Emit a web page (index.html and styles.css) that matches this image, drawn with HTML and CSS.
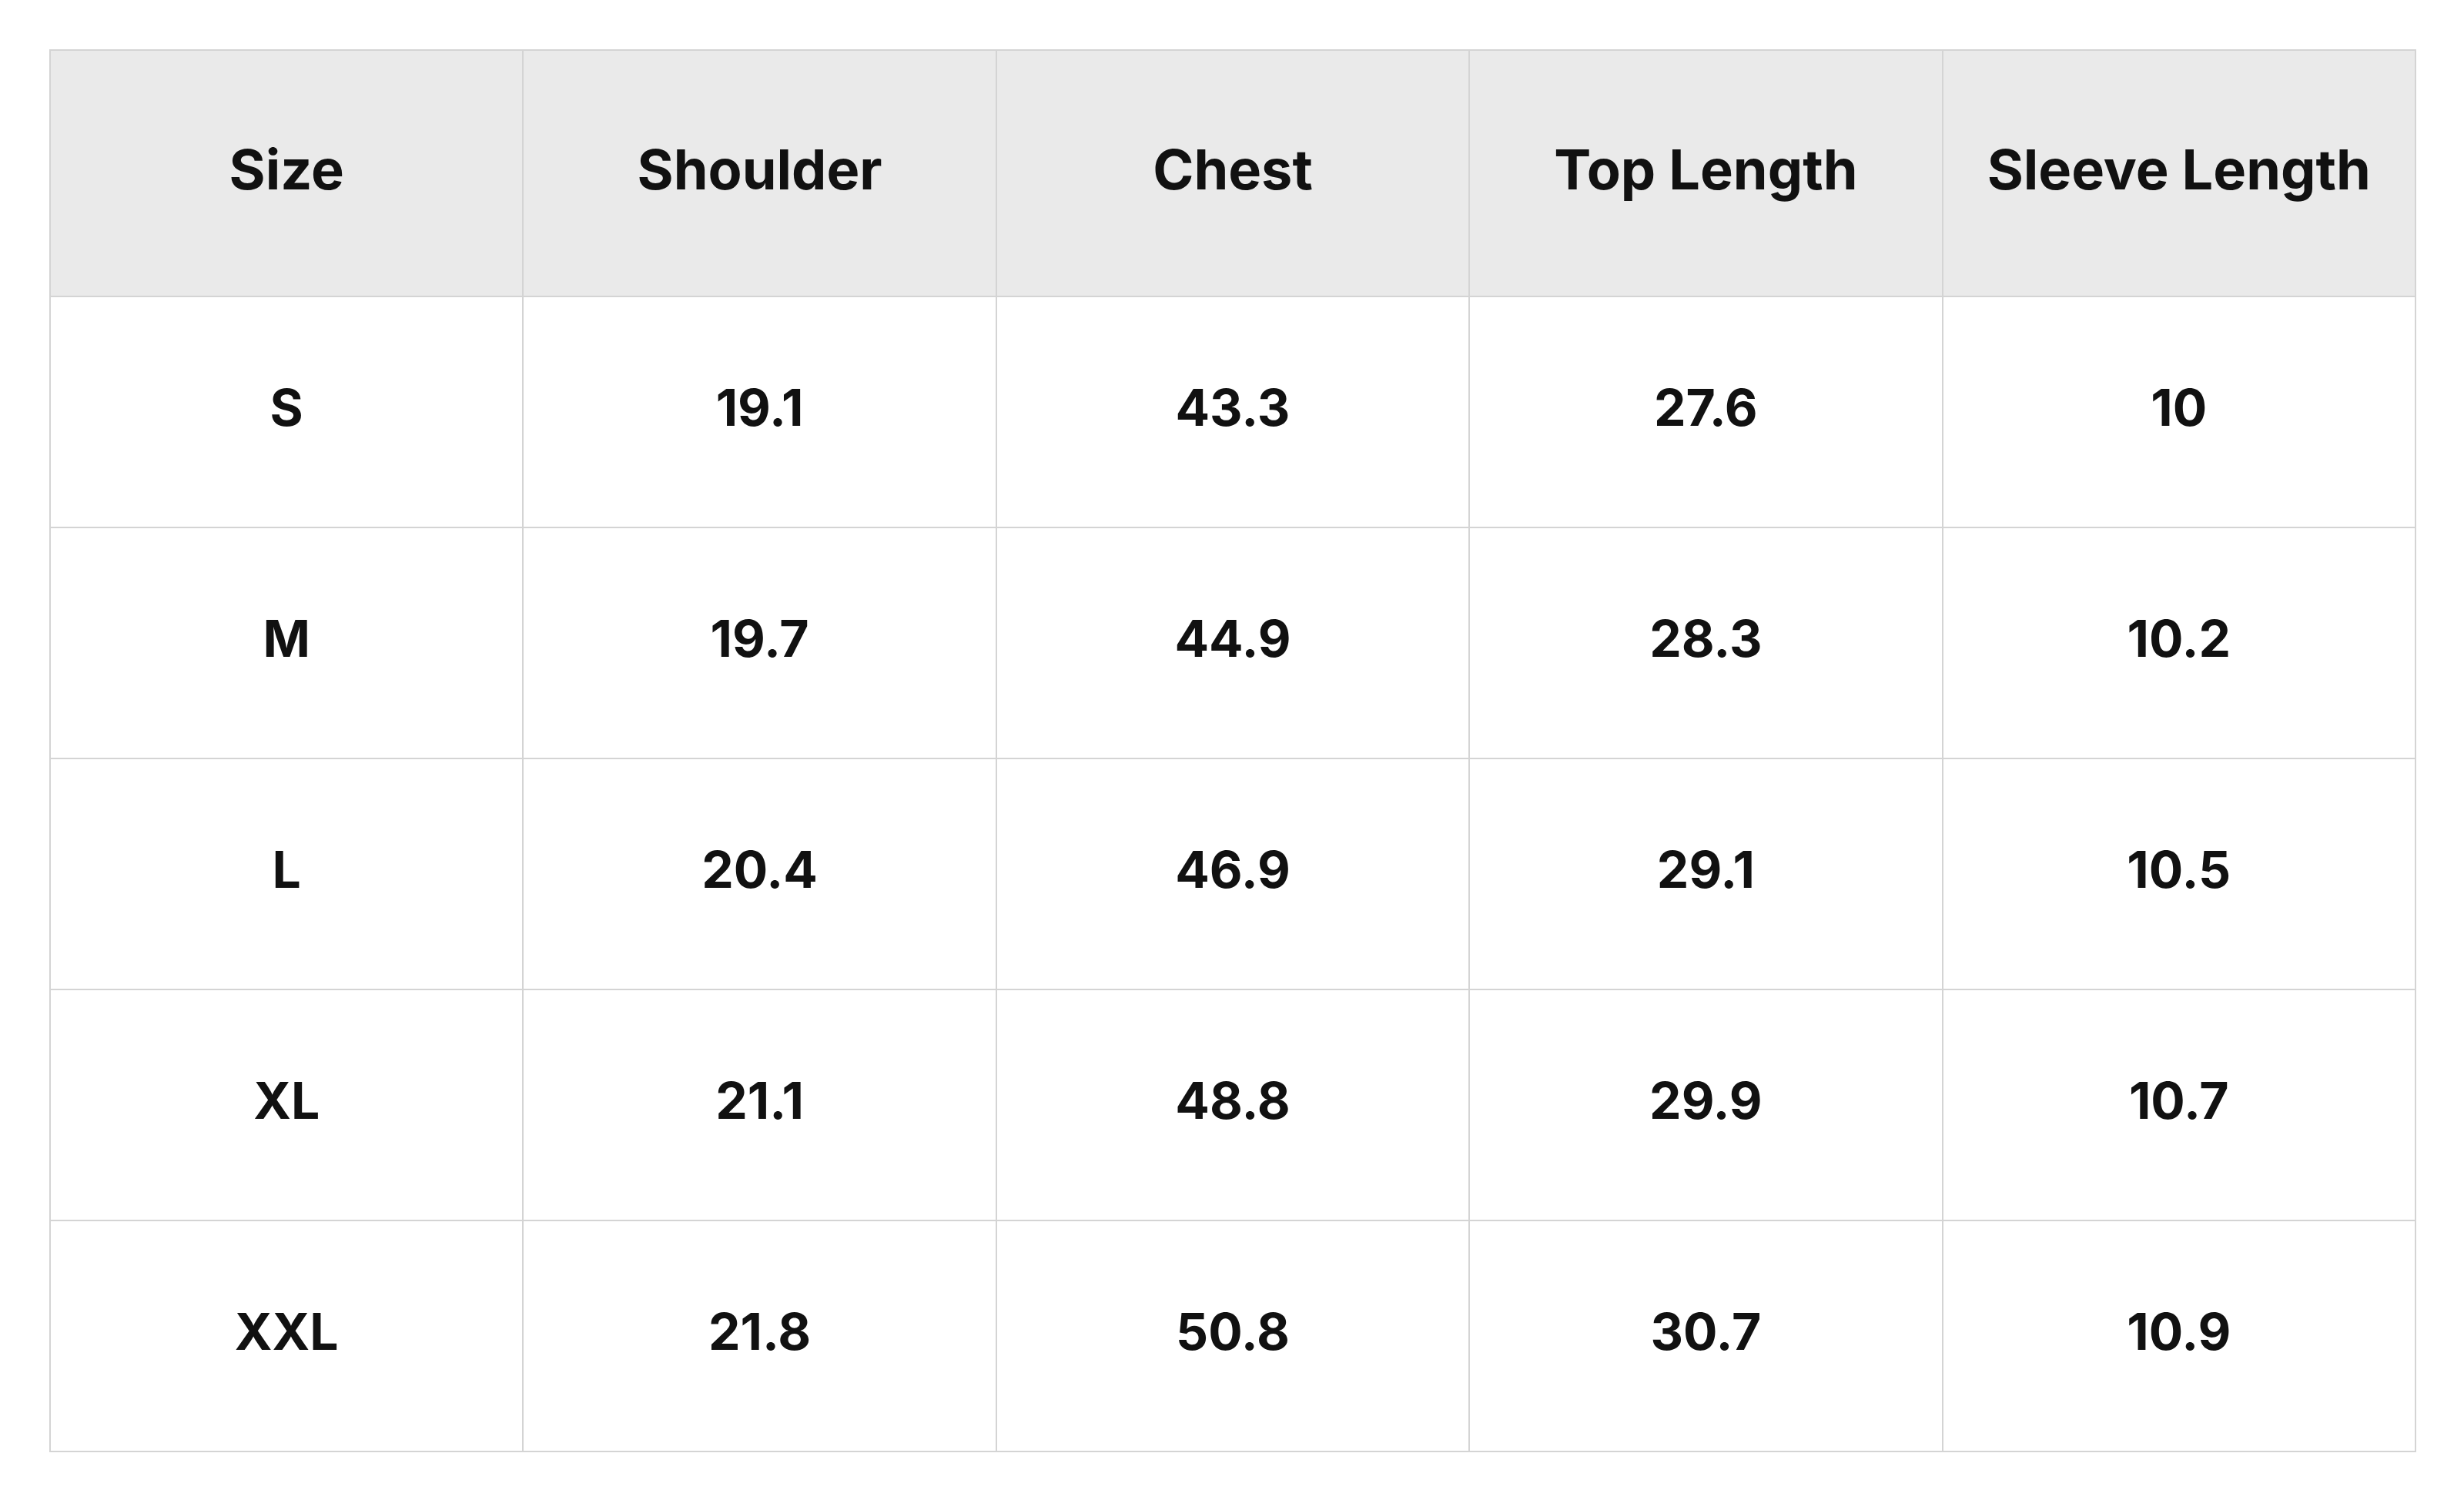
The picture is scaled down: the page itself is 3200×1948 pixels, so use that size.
FILE: index.html
```html
<!DOCTYPE html>
<html>
<head>
<meta charset="utf-8">
<link rel="stylesheet" href="styles.css">
</head>
<body>
<div class="wrap">
<table class="size-table">
  <thead>
    <tr><th>Size</th><th>Shoulder</th><th>Chest</th><th>Top Length</th><th>Sleeve Length</th></tr>
  </thead>
  <tbody>
    <tr><td>S</td><td>19.1</td><td>43.3</td><td>27.6</td><td>10</td></tr>
    <tr><td>M</td><td>19.7</td><td>44.9</td><td>28.3</td><td>10.2</td></tr>
    <tr><td>L</td><td>20.4</td><td>46.9</td><td>29.1</td><td>10.5</td></tr>
    <tr><td>XL</td><td>21.1</td><td>48.8</td><td>29.9</td><td>10.7</td></tr>
    <tr><td>XXL</td><td>21.8</td><td>50.8</td><td>30.7</td><td>10.9</td></tr>
  </tbody>
</table>
</div>
</body>
</html>
```
FILE: styles.css
```css
html, body {
  margin: 0;
  padding: 0;
  background: #ffffff;
}
.wrap {
  padding: 64px 63px 62px 64px;
}
.size-table {
  width: 3074px;
  border-collapse: collapse;
  table-layout: fixed;
  font-family: Inter, "Noto Sans", sans-serif;
  color: #111111;
}
.size-table th,
.size-table td {
  border: 2px solid #d4d4d4;
  text-align: center;
  vertical-align: middle;
  padding: 0 0 12px 0;
}
.size-table th {
  background: #eaeaea;
  height: 306px;
  font-size: 72px;
  font-weight: 700;
}
.size-table td {
  height: 286px;
  font-size: 66px;
  font-weight: 700;
}
```
